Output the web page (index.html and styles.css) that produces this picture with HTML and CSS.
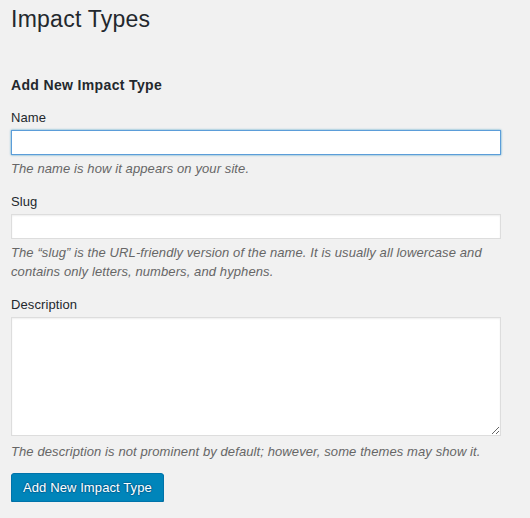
FILE: index.html
```html
<!DOCTYPE html>
<html lang="en">
<head>
<meta charset="utf-8">
<title>Impact Types</title>
<link rel="stylesheet" href="styles.css">
</head>
<body>
<div class="wrap">
  <h1 class="page-title">Impact Types</h1>
  <form class="form-wrap">
    <h2 class="form-title">Add New Impact Type</h2>
    <div class="form-field first">
      <label class="field-label" for="tag-name">Name</label>
      <input class="text-input focused" id="tag-name" type="text">
      <p class="hint">The name is how it appears on your site.</p>
    </div>
    <div class="form-field">
      <label class="field-label" for="tag-slug">Slug</label>
      <input class="text-input" id="tag-slug" type="text">
      <p class="hint">The “slug” is the URL-friendly version of the name. It is usually all lowercase and<br>contains only letters, numbers, and hyphens.</p>
    </div>
    <div class="form-field">
      <label class="field-label" for="tag-description">Description</label>
      <textarea class="text-area" id="tag-description"></textarea>
      <p class="hint hint-after-area">The description is not prominent by default; however, some themes may show it.</p>
    </div>
    <div class="submit-row">
      <button class="button-primary" type="button">Add New Impact Type</button>
    </div>
  </form>
</div>
</body>
</html>
```

FILE: styles.css
```css
html, body {
  margin: 0;
  padding: 0;
  background: #f1f1f1;
}

body {
  font-family: "Liberation Sans", Arial, sans-serif;
  color: #23282d;
  font-size: 13px;
}

.wrap {
  padding: 4px 0 0 11px;
  width: 490px;
}

.page-title {
  margin: 0;
  font-size: 23px;
  font-weight: 400;
  line-height: 30px;
  letter-spacing: 0.25px;
}

.form-wrap {
  margin: 0;
}

.form-title {
  margin: 42px 0 0;
  font-size: 14px;
  font-weight: 700;
  line-height: 18px;
  letter-spacing: 0.35px;
}

.form-field {
  margin-top: 15px;
}

.field-label {
  display: block;
  font-size: 13px;
  line-height: 18px;
  margin-bottom: 3px;
  letter-spacing: 0.1px;
}

.text-input {
  display: block;
  box-sizing: border-box;
  width: 490px;
  height: 25px;
  margin: 0;
  padding: 3px 5px;
  border: 1px solid #ddd;
  border-radius: 0;
  background: #fff;
  box-shadow: inset 0 1px 2px rgba(0, 0, 0, 0.07);
  font: 13px "Liberation Sans", Arial, sans-serif;
  outline: none;
}

.text-input.focused {
  border-color: #5b9dd9;
  box-shadow: 0 0 2px rgba(30, 140, 190, 0.8);
}

.text-area {
  display: block;
  box-sizing: border-box;
  width: 490px;
  height: 119px;
  margin: 0;
  padding: 2px 6px;
  border: 1px solid #ddd;
  background: #fff;
  box-shadow: inset 0 1px 2px rgba(0, 0, 0, 0.07);
  font: 13px "Liberation Sans", Arial, sans-serif;
  outline: none;
}

.hint {
  margin: 4px 0 0;
  font-size: 13px;
  font-style: italic;
  line-height: 19px;
  color: #666;
  letter-spacing: 0.1px;
}

.hint-after-area {
  margin-top: 6px;
}

.submit-row {
  margin-top: 12px;
}

.button-primary {
  box-sizing: border-box;
  height: 29px;
  margin: 0;
  padding: 0 11px;
  font: 13px/27px "Liberation Sans", Arial, sans-serif;
  letter-spacing: 0.1px;
  color: #fff;
  background: #0085ba;
  border: 1px solid #0073aa;
  border-radius: 3px;
  box-shadow: 0 1px 0 #006799;
  text-shadow: 0 -1px 1px #006799, 1px 0 1px #006799, 0 1px 1px #006799, -1px 0 1px #006799;
  cursor: pointer;
}
```
